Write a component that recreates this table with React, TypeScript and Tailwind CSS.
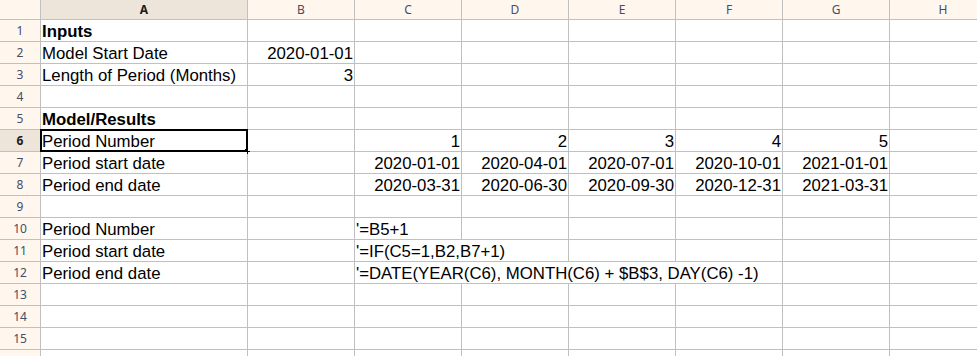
import React from "react";

const COLS = ["A", "B", "C", "D", "E", "F", "G", "H"];

type Cell = { text: string; align?: "left" | "right"; bold?: boolean; span?: 2 | 4 };
type Row = Record<string, Cell>;

const periods = ["1", "2", "3", "4", "5"];
const starts = ["2020-01-01", "2020-04-01", "2020-07-01", "2020-10-01", "2021-01-01"];
const ends = ["2020-03-31", "2020-06-30", "2020-09-30", "2020-12-31", "2021-03-31"];

function spread(values: string[]): Row {
  const r: Row = {};
  values.forEach((v, i) => (r[COLS[i + 2]] = { text: v, align: "right" }));
  return r;
}

const rows: Row[] = [
  { A: { text: "Inputs", bold: true } },
  { A: { text: "Model Start Date" }, B: { text: "2020-01-01", align: "right" } },
  { A: { text: "Length of Period (Months)" }, B: { text: "3", align: "right" } },
  {},
  { A: { text: "Model/Results", bold: true } },
  { A: { text: "Period Number" }, ...spread(periods) },
  { A: { text: "Period start date" }, ...spread(starts) },
  { A: { text: "Period end date" }, ...spread(ends) },
  {},
  { A: { text: "Period Number" }, C: { text: "'=B5+1" } },
  { A: { text: "Period start date" }, C: { text: "'=IF(C5=1,B2,B7+1)", span: 2 } },
  {
    A: { text: "Period end date" },
    C: { text: "'=DATE(YEAR(C6), MONTH(C6) + $B$3, DAY(C6) -1)", span: 4 },
  },
  {},
  {},
  {},
  {},
];

const headerText = "font-['Noto_Sans',sans-serif] text-[12px] text-[#464b66] flex items-center justify-center";

export default function App() {
  return (
    <div className="w-[977px] h-[356px] overflow-hidden bg-white">
      <div className="grid grid-cols-[40px_206px_repeat(7,106px)] grid-rows-[19px_repeat(16,21px)] gap-px bg-[#c0c0c0] font-['Liberation_Sans',Arial,sans-serif] text-[16.8px] text-black">
        <div className="bg-[#fff7ee]" />
        {COLS.map((c) => (
          <div
            key={c}
            className={
              c === "A"
                ? `${headerText} bg-[#eee5da] font-bold !text-[#1b1b1b]`
                : `${headerText} bg-[#fff7ee]`
            }
          >
            {c}
          </div>
        ))}

        {rows.map((row, ri) => {
          const n = ri + 1;
          const cells: React.ReactNode[] = [];
          let skip = 0;
          COLS.forEach((c) => {
            if (skip > 0) {
              skip--;
              return;
            }
            const cell = row[c];
            const span = cell?.span ?? 1;
            skip = span - 1;
            const selected = n === 6 && c === "A";
            cells.push(
              <div
                key={c}
                className={[
                  "relative bg-white whitespace-nowrap leading-[21px] px-px pt-px",
                  span === 2 ? "col-span-2" : span === 4 ? "col-span-4" : "",
                  cell?.align === "right" ? "text-right" : "text-left",
                  cell?.bold ? "font-bold" : "",
                ].join(" ")}
              >
                {cell?.text}
                {selected && (
                  <>
                    <div className="absolute -left-px -top-px -right-px -bottom-px border-2 border-black" />
                    <div className="absolute -right-[3px] -bottom-[3px] w-[5px] h-[5px] bg-black" />
                  </>
                )}
              </div>
            );
          });
          return (
            <React.Fragment key={n}>
              <div
                className={
                  n === 6
                    ? `${headerText} bg-[#eee5da] font-bold !text-[#1b1b1b]`
                    : `${headerText} bg-[#fff7ee]`
                }
              >
                {n < 16 ? n : ""}
              </div>
              {cells}
            </React.Fragment>
          );
        })}
      </div>
    </div>
  );
}
